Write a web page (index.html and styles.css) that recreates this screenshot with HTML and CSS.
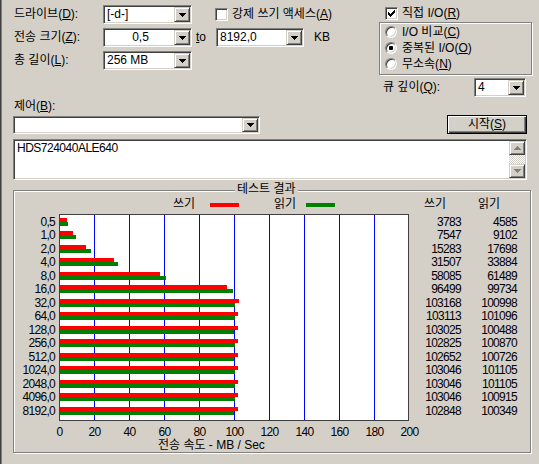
FILE: index.html
```html
<!DOCTYPE html>
<html lang="ko">
<head>
<meta charset="utf-8">
<title>ATTO Disk Benchmark</title>
<link rel="stylesheet" href="styles.css">
</head>
<body>
<div class="win">
  <div class="top">
    <div class="left">
      <div class="row">
        <span class="lbl">드라이브(<u>D</u>):</span>
        <div class="combo c-w89"><span class="cv">[-d-]</span><span class="dd"><svg width="7" height="4" viewBox="0 0 7 4"><path d="M0 0h7v1h-1v1h-1v1h-1v1h-1v-1h-1v-1h-1v-1h-1z"/></svg></span></div>
        <label class="chk chk-force"><span class="box"></span><span>강제 쓰기 액세스(<u>A</u>)</span></label>
      </div>
      <div class="row">
        <span class="lbl">전송 크기(<u>Z</u>):</span>
        <div class="combo c-w89"><span class="cv center">0,5</span><span class="dd"><svg width="7" height="4" viewBox="0 0 7 4"><path d="M0 0h7v1h-1v1h-1v1h-1v1h-1v-1h-1v-1h-1v-1h-1z"/></svg></span></div>
        <span class="to"><u>t</u>o</span>
        <div class="combo c-w88"><span class="cv">8192,0</span><span class="dd"><svg width="7" height="4" viewBox="0 0 7 4"><path d="M0 0h7v1h-1v1h-1v1h-1v1h-1v-1h-1v-1h-1v-1h-1z"/></svg></span></div>
        <span class="kb">KB</span>
      </div>
      <div class="row">
        <span class="lbl">총 길이(<u>L</u>):</span>
        <div class="combo c-w89"><span class="cv">256 MB</span><span class="dd"><svg width="7" height="4" viewBox="0 0 7 4"><path d="M0 0h7v1h-1v1h-1v1h-1v1h-1v-1h-1v-1h-1v-1h-1z"/></svg></span></div>
      </div>
    </div>
    <div class="right">
      <label class="chk chk-direct"><span class="box"><svg width="7" height="7" viewBox="0 0 7 7"><path d="M6 0h1v1h-1zM5 1h2v1h-2zM0 2h1v1h-1zM4 2h3v1h-3zM0 3h2v1h-2zM3 3h3v1h-3zM0 4h5v1h-5zM1 5h3v1h-3zM2 6h1v1h-1z"/></svg></span><span>직접 I/O(<u>R</u>)</span></label>
      <div class="radios">
        <div class="radio"><span class="rb"></span><span>I/O 비교(<u>C</u>)</span></div>
        <div class="radio"><span class="rb on"></span><span>중복된 I/O(<u>O</u>)</span></div>
        <div class="radio"><span class="rb"></span><span>무소속(<u>N</u>)</span></div>
      </div>
      <div class="qrow">
        <span>큐 깊이(<u>Q</u>):</span>
        <div class="combo c-q"><span class="cv">4</span><span class="dd"><svg width="7" height="4" viewBox="0 0 7 4"><path d="M0 0h7v1h-1v1h-1v1h-1v1h-1v-1h-1v-1h-1v-1h-1z"/></svg></span></div>
      </div>
    </div>
  </div>

  <div class="ctl-lbl">제어(<u>B</u>):</div>
  <div class="ctl-row">
    <div class="combo c-ctl"><span class="cv"></span><span class="dd"><svg width="7" height="4" viewBox="0 0 7 4"><path d="M0 0h7v1h-1v1h-1v1h-1v1h-1v-1h-1v-1h-1v-1h-1z"/></svg></span></div>
    <button class="btn" type="button">시작(<u>S</u>)</button>
  </div>

  <div class="memo">
    <div class="memo-text">HDS724040ALE640</div>
    <div class="sb">
      <span class="sbtn"><svg width="7" height="4" viewBox="0 0 7 4"><path d="M3 0h1v1h1v1h1v1h1v1h-7v-1h1v-1h1v-1h1z"/></svg></span>
      <span class="track"></span>
      <span class="sbtn"><svg width="7" height="4" viewBox="0 0 7 4"><path d="M0 0h7v1h-1v1h-1v1h-1v1h-1v-1h-1v-1h-1v-1h-1z"/></svg></span>
    </div>
  </div>

  <div class="gb">
    <div class="gb-title">테스트 결과</div>
    <div class="chart">
      <div></div>
      <div class="legend">
        <span class="lg-t">쓰기</span><span class="lg-bar red lg-b1"></span>
        <span class="lg-t lg-t2">읽기</span><span class="lg-bar green lg-b2"></span>
      </div>
      <div class="hdr">쓰기</div>
      <div class="hdr">읽기</div>

      <div class="col labels num">
        <div class="r">0,5</div><div class="r">1,0</div><div class="r">2,0</div><div class="r">4,0</div><div class="r">8,0</div>
        <div class="r">16,0</div><div class="r">32,0</div><div class="r">64,0</div><div class="r">128,0</div><div class="r">256,0</div>
        <div class="r">512,0</div><div class="r">1024,0</div><div class="r">2048,0</div><div class="r">4096,0</div><div class="r">8192,0</div>
      </div>
      <div class="plot">
        <div class="r"><div class="bw" style="width:7px"></div><div class="bg" style="width:8px"></div></div>
        <div class="r"><div class="bw" style="width:13px"></div><div class="bg" style="width:16px"></div></div>
        <div class="r"><div class="bw" style="width:26px"></div><div class="bg" style="width:31px"></div></div>
        <div class="r"><div class="bw" style="width:54px"></div><div class="bg" style="width:58px"></div></div>
        <div class="r"><div class="bw" style="width:100px"></div><div class="bg" style="width:106px"></div></div>
        <div class="r"><div class="bw" style="width:167px"></div><div class="bg" style="width:173px"></div></div>
        <div class="r"><div class="bw" style="width:179px"></div><div class="bg" style="width:175px"></div></div>
        <div class="r"><div class="bw" style="width:178px"></div><div class="bg" style="width:175px"></div></div>
        <div class="r"><div class="bw" style="width:178px"></div><div class="bg" style="width:174px"></div></div>
        <div class="r"><div class="bw" style="width:178px"></div><div class="bg" style="width:175px"></div></div>
        <div class="r"><div class="bw" style="width:178px"></div><div class="bg" style="width:174px"></div></div>
        <div class="r"><div class="bw" style="width:178px"></div><div class="bg" style="width:175px"></div></div>
        <div class="r"><div class="bw" style="width:178px"></div><div class="bg" style="width:175px"></div></div>
        <div class="r"><div class="bw" style="width:178px"></div><div class="bg" style="width:175px"></div></div>
        <div class="r"><div class="bw" style="width:178px"></div><div class="bg" style="width:174px"></div></div>
      </div>
      <div class="col vals num">
        <div class="r">3783</div><div class="r">7547</div><div class="r">15283</div><div class="r">31507</div><div class="r">58085</div>
        <div class="r">96499</div><div class="r">103168</div><div class="r">103113</div><div class="r">103025</div><div class="r">102825</div>
        <div class="r">102652</div><div class="r">103046</div><div class="r">103046</div><div class="r">103046</div><div class="r">102848</div>
      </div>
      <div class="col vals num">
        <div class="r">4585</div><div class="r">9102</div><div class="r">17698</div><div class="r">33884</div><div class="r">61489</div>
        <div class="r">99734</div><div class="r">100998</div><div class="r">101096</div><div class="r">100488</div><div class="r">100870</div>
        <div class="r">100726</div><div class="r">101105</div><div class="r">101105</div><div class="r">100915</div><div class="r">100349</div>
      </div>
    </div>
    <div class="ticks num">
      <span>0</span><span>20</span><span>40</span><span>60</span><span>80</span><span>100</span>
      <span>120</span><span>140</span><span>160</span><span>180</span><span>200</span>
    </div>
    <div class="axis-title">전송 속도 - MB / Sec</div>
  </div>
</div>
</body>
</html>
```

FILE: styles.css
```css
html, body {
  margin: 0;
  padding: 0;
}
body {
  background: #d4d0c8;
  color: #000;
  font-family: "Liberation Sans", "Noto Sans CJK KR", sans-serif;
  font-size: 12px;
  line-height: 13px;
}
u { text-decoration: underline; text-underline-offset: 1px; }

.win {
  width: 539px;
  height: 464px;
  box-sizing: border-box;
  border-left: 1px solid #404040;
  box-shadow: inset 1px 0 #808080;
  padding: 5px 0 0 12px;
  overflow: hidden;
}

.top { display: flex; }
.left {
  width: 366px;
  display: flex;
  flex-direction: column;
  gap: 4px;
}
.row {
  display: flex;
  align-items: center;
  height: 19px;
}
.lbl {
  width: 89px;
  padding-left: 1px;
  white-space: nowrap;
}

/* combo box */
.combo {
  box-sizing: border-box;
  height: 19px;
  display: flex;
  background: #fff;
  border: 1px solid;
  border-color: #808080 #fff #fff #808080;
  box-shadow: inset 1px 1px #404040, inset -1px -1px #d4d0c8;
  padding: 1px;
}
.cv {
  flex: 1;
  line-height: 15px;
  padding-left: 2px;
  white-space: nowrap;
  overflow: hidden;
}
.cv.center { text-align: center; }
.dd {
  width: 16px;
  flex: none;
  box-sizing: border-box;
  background: #d4d0c8;
  border: 1px solid;
  border-color: #d4d0c8 #404040 #404040 #d4d0c8;
  box-shadow: inset 1px 1px #fff, inset -1px -1px #808080;
  display: flex;
  align-items: center;
  justify-content: center;
}
.dd svg, .sbtn svg { display: block; shape-rendering: crispEdges; }
.c-w89 { width: 89px; }
.c-w88 { width: 88px; }
.c-q { width: 52px; margin-left: auto; margin-right: 6px; }
.c-ctl { width: 247px; height: 18px; margin-top: 1px; }

/* checkbox */
.chk {
  display: flex;
  align-items: center;
  gap: 4px;
  white-space: nowrap;
}
.box {
  width: 13px;
  height: 13px;
  box-sizing: border-box;
  background: #fff;
  border: 1px solid;
  border-color: #808080 #fff #fff #808080;
  box-shadow: inset 1px 1px #404040, inset -1px -1px #d4d0c8;
  display: flex;
  align-items: center;
  justify-content: center;
}
.box svg { display: block; shape-rendering: crispEdges; }
.chk-force { margin-left: 23px; }

.to {
  width: 24px;
  box-sizing: border-box;
  padding-left: 4px;
}
.kb { margin-left: 10px; }

/* right column */
.right { width: 153px; }
.chk-direct {
  height: 17px;
  padding-left: 6px;
}
.radios {
  box-sizing: border-box;
  height: 53px;
  border: 1px solid #808080;
  box-shadow: inset 1px 1px #fff, 1px 1px #fff;
  padding: 1px 0 0 5px;
}
.radio {
  height: 16px;
  display: flex;
  align-items: center;
  white-space: nowrap;
}
.rb {
  width: 12px;
  height: 12px;
  box-sizing: border-box;
  border-radius: 50%;
  background: #fff;
  border: 1px solid;
  border-color: #808080 #fff #fff #808080;
  box-shadow: inset 1px 1px #404040, inset -1px -1px #d4d0c8;
  margin-right: 5px;
  display: flex;
  align-items: center;
  justify-content: center;
}
.rb.on::after {
  content: "";
  width: 4px;
  height: 4px;
  border-radius: 1px;
  background: #000;
}
.qrow {
  margin-top: 3px;
  display: flex;
  align-items: center;
  padding-left: 4px;
  white-space: nowrap;
}

/* control */
.ctl-lbl {
  margin-top: 3px;
  padding-left: 1px;
  line-height: 13px;
}
.ctl-row {
  margin-top: 2px;
  height: 19px;
  display: flex;
}
.btn {
  margin: 0 0 0 187px;
  width: 80px;
  height: 19px;
  padding: 0;
  font: inherit;
  line-height: 15px;
  color: #000;
  background: #d4d0c8;
  border: 1px solid #000;
  box-shadow: inset 1px 1px #fff, inset -1px -1px #404040, inset -2px -2px #808080;
}

/* memo */
.memo {
  margin-top: 5px;
  width: 514px;
  height: 41px;
  box-sizing: border-box;
  display: flex;
  background: #fff;
  border: 1px solid;
  border-color: #808080 #fff #fff #808080;
  box-shadow: inset 1px 1px #404040, inset -1px -1px #d4d0c8;
  padding: 1px;
}
.memo-text {
  flex: 1;
  padding: 1px 0 0 2px;
  letter-spacing: -0.5px;
}
.sb {
  width: 16px;
  display: flex;
  flex-direction: column;
}
.sbtn {
  height: 14px;
  box-sizing: border-box;
  background: #d4d0c8;
  border: 1px solid;
  border-color: #d4d0c8 #404040 #404040 #d4d0c8;
  box-shadow: inset 1px 1px #fff, inset -1px -1px #808080;
  display: flex;
  align-items: center;
  justify-content: center;
  fill: #808080;
}
.track {
  flex: 1;
  background: repeating-conic-gradient(#fff 0 25%, #d4d0c8 0 50%) 0 0 / 2px 2px;
}

/* group box */
.gb {
  position: relative;
  margin-top: 10px;
  width: 518px;
  height: 263px;
  box-sizing: border-box;
  border: 1px solid #808080;
  box-shadow: inset 1px 1px #fff, 1px 1px #fff;
  padding-top: 7px;
}
.gb-title {
  position: absolute;
  top: -8px;
  left: 221px;
  padding: 0 2px;
  background: #d4d0c8;
  line-height: 13px;
}
.chart {
  display: grid;
  grid-template-columns: 45px 350px 52px 56px;
  grid-template-rows: 13px 207px;
  row-gap: 3px;
}
.legend {
  display: flex;
  align-items: center;
  line-height: 13px;
}
.lg-t {
  width: 24px;
  margin-left: 114px;
}
.lg-t2 { margin-left: 35px; }
.lg-bar { width: 29px; height: 4px; }
.lg-b1 { margin-left: 13px; }
.lg-b2 { margin-left: 8px; }
.red { background: #ff0000; }
.green { background: #008000; }
.hdr {
  text-align: center;
  line-height: 13px;
}

.num { letter-spacing: -0.7px; }
.col {
  padding-top: 4px;
  text-align: right;
}
.labels { padding-right: 4px; }
.vals { padding-right: 0; }
.col .r, .plot .r {
  height: 13px;
  line-height: 9px;
}
.col .r:nth-child(even), .plot .r:nth-child(even) { height: 14px; }

.plot {
  box-sizing: border-box;
  border: 1px solid #404040;
  padding-top: 3px;
  background: #fff repeating-linear-gradient(to right, transparent 0 34px, #0000ff 34px 35px);
  overflow: hidden;
}
.bw { height: 4px; background: #ff0000; }
.bg { height: 4px; background: #008000; }

.ticks {
  display: flex;
  margin-left: 28px;
  padding-top: 4px;
  line-height: 14px;
}
.ticks span {
  width: 35px;
  flex: none;
  text-align: center;
}
.axis-title {
  margin-left: 144px;
  line-height: 12px;
  white-space: nowrap;
}
```
